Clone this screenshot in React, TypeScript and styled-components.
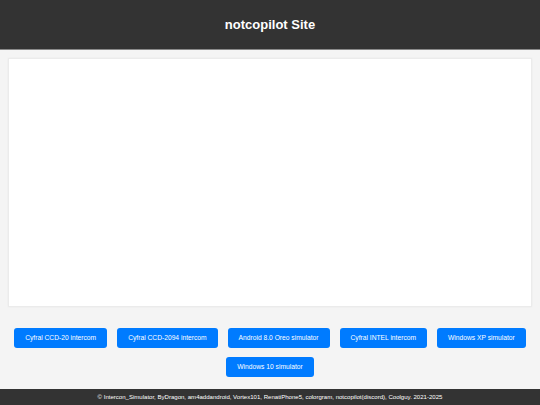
import React from "react";
import styled, { createGlobalStyle } from "styled-components";

const Global = createGlobalStyle`
  html, body { margin: 0; padding: 0; background: #f4f4f4; }
  body { font-family: "Liberation Sans", Arial, sans-serif; }
  * { box-sizing: border-box; }
`;

const Header = styled.header`
  height: 50px;
  background: #333333;
  border-bottom: 1px solid #8a8a8a;
  display: flex;
  align-items: center;
  justify-content: center;
`;

const Title = styled.h1`
  margin: 0;
  color: #ffffff;
  font-size: 13px;
  font-weight: bold;
`;

const Main = styled.main`
  padding: 8px 8px 0;
`;

const Frame = styled.div`
  height: 249px;
  background: #ffffff;
  border: 1px solid #ebebeb;
  box-shadow: 0 0 2px rgba(0, 0, 0, 0.05);
`;

const ButtonBar = styled.nav`
  display: flex;
  flex-wrap: wrap;
  justify-content: center;
  padding: 16px 0 8px;
`;

const LinkButton = styled.button`
  margin: 4.5px 5px;
  height: 20px;
  padding: 0 11px;
  border: none;
  border-radius: 3px;
  background: #007bff;
  color: #ffffff;
  font-family: "Liberation Sans", Arial, sans-serif;
  font-size: 6.7px;
  line-height: 20px;
  cursor: pointer;
`;

const Footer = styled.footer`
  height: 16px;
  background: #333333;
  color: #ffffff;
  display: flex;
  align-items: center;
  justify-content: center;
  font-size: 6.05px;
`;

const buttons = [
  "Cyfral CCD-20 intercom",
  "Cyfral CCD-2094 intercom",
  "Android 8.0 Oreo simulator",
  "Cyfral INTEL intercom",
  "Windows XP simulator",
  "Windows 10 simulator",
];

export default function App() {
  return (
    <>
      <Global />
      <Header>
        <Title>notcopilot Site</Title>
      </Header>
      <Main>
        <Frame />
      </Main>
      <ButtonBar>
        {buttons.map((b) => (
          <LinkButton key={b}>{b}</LinkButton>
        ))}
      </ButtonBar>
      <Footer>
        © Intercon_Simulator, ByDragon, am4addandroid, Vortex101, RenatiPhone5, colorgram, notcopilot(discord), Coolguy. 2021-2025
      </Footer>
    </>
  );
}
